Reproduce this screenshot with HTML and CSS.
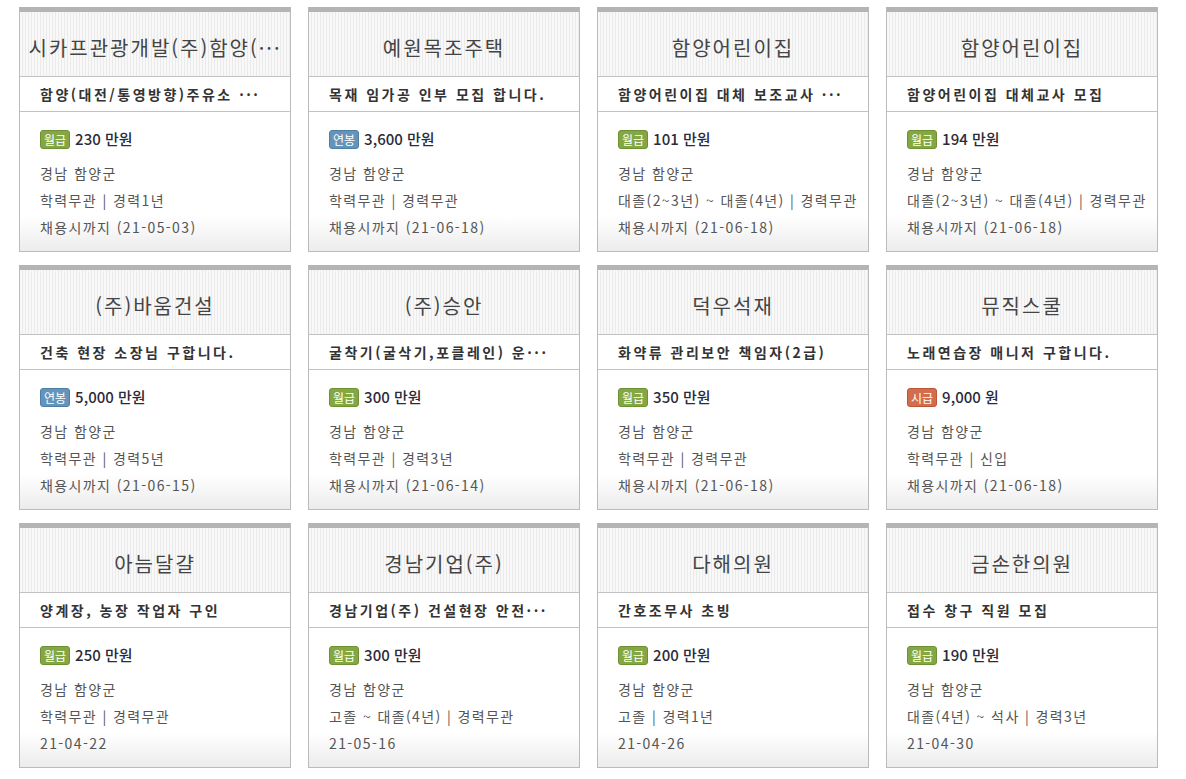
FILE: index.html
```html
<!DOCTYPE html>
<html lang="ko">
<head>
    <meta charset="UTF-8">
    <meta name="viewport" content="width=device-width, initial-scale=1.0">
    <title>채용정보</title>
    <link rel="stylesheet" href="styles.css">
</head>
<body>
    <div class="job-list">
        <div class="job">
            <div class="job-company">시카프관광개발(주)함양(···</div>
            <div class="job-title">함양(대전/통영방향)주유소 ···</div>
            <div class="job-info">
                <p class="pay"><span class="badge month">월급</span>230 만원</p>
                <p>경남 함양군</p>
                <p>학력무관 | 경력1년</p>
                <p>채용시까지 (21-05-03)</p>
            </div>
        </div>
        <div class="job">
            <div class="job-company">예원목조주택</div>
            <div class="job-title">목재 임가공 인부 모집 합니다.</div>
            <div class="job-info">
                <p class="pay"><span class="badge year">연봉</span>3,600 만원</p>
                <p>경남 함양군</p>
                <p>학력무관 | 경력무관</p>
                <p>채용시까지 (21-06-18)</p>
            </div>
        </div>
        <div class="job">
            <div class="job-company">함양어린이집</div>
            <div class="job-title">함양어린이집 대체 보조교사 ···</div>
            <div class="job-info">
                <p class="pay"><span class="badge month">월급</span>101 만원</p>
                <p>경남 함양군</p>
                <p>대졸(2~3년) ~ 대졸(4년) | 경력무관</p>
                <p>채용시까지 (21-06-18)</p>
            </div>
        </div>
        <div class="job">
            <div class="job-company">함양어린이집</div>
            <div class="job-title">함양어린이집 대체교사 모집</div>
            <div class="job-info">
                <p class="pay"><span class="badge month">월급</span>194 만원</p>
                <p>경남 함양군</p>
                <p>대졸(2~3년) ~ 대졸(4년) | 경력무관</p>
                <p>채용시까지 (21-06-18)</p>
            </div>
        </div>

        <div class="job">
            <div class="job-company">(주)바움건설</div>
            <div class="job-title">건축 현장 소장님 구합니다.</div>
            <div class="job-info">
                <p class="pay"><span class="badge year">연봉</span>5,000 만원</p>
                <p>경남 함양군</p>
                <p>학력무관 | 경력5년</p>
                <p>채용시까지 (21-06-15)</p>
            </div>
        </div>
        <div class="job">
            <div class="job-company">(주)승안</div>
            <div class="job-title">굴착기(굴삭기,포클레인) 운···</div>
            <div class="job-info">
                <p class="pay"><span class="badge month">월급</span>300 만원</p>
                <p>경남 함양군</p>
                <p>학력무관 | 경력3년</p>
                <p>채용시까지 (21-06-14)</p>
            </div>
        </div>
        <div class="job">
            <div class="job-company">덕우석재</div>
            <div class="job-title">화약류 관리보안 책임자(2급)</div>
            <div class="job-info">
                <p class="pay"><span class="badge month">월급</span>350 만원</p>
                <p>경남 함양군</p>
                <p>학력무관 | 경력무관</p>
                <p>채용시까지 (21-06-18)</p>
            </div>
        </div>
        <div class="job">
            <div class="job-company">뮤직스쿨</div>
            <div class="job-title">노래연습장 매니저 구합니다.</div>
            <div class="job-info">
                <p class="pay"><span class="badge hour">시급</span>9,000 원</p>
                <p>경남 함양군</p>
                <p>학력무관 | 신입</p>
                <p>채용시까지 (21-06-18)</p>
            </div>
        </div>

        <div class="job">
            <div class="job-company">아늠달걀</div>
            <div class="job-title">양계장, 농장 작업자 구인</div>
            <div class="job-info">
                <p class="pay"><span class="badge month">월급</span>250 만원</p>
                <p>경남 함양군</p>
                <p>학력무관 | 경력무관</p>
                <p>21-04-22</p>
            </div>
        </div>
        <div class="job">
            <div class="job-company">경남기업(주)</div>
            <div class="job-title">경남기업(주) 건설현장 안전···</div>
            <div class="job-info">
                <p class="pay"><span class="badge month">월급</span>300 만원</p>
                <p>경남 함양군</p>
                <p>고졸 ~ 대졸(4년) | 경력무관</p>
                <p>21-05-16</p>
            </div>
        </div>
        <div class="job">
            <div class="job-company">다해의원</div>
            <div class="job-title">간호조무사 초빙</div>
            <div class="job-info">
                <p class="pay"><span class="badge month">월급</span>200 만원</p>
                <p>경남 함양군</p>
                <p>고졸 | 경력1년</p>
                <p>21-04-26</p>
            </div>
        </div>
        <div class="job">
            <div class="job-company">금손한의원</div>
            <div class="job-title">접수 창구 직원 모집</div>
            <div class="job-info">
                <p class="pay"><span class="badge month">월급</span>190 만원</p>
                <p>경남 함양군</p>
                <p>대졸(4년) ~ 석사 | 경력3년</p>
                <p>21-04-30</p>
            </div>
        </div>
    </div>
</body>
</html>
```

FILE: styles.css
```css
body {
    margin: 0;
    padding: 7px 0 0 19px;
    background: #fff;
    font-family: "Noto Sans CJK KR", "Noto Sans", sans-serif;
    color: #555;
}

.job-list {
    display: grid;
    grid-template-columns: repeat(4, 272px);
    column-gap: 17px;
    row-gap: 13px;
}

.job {
    box-sizing: border-box;
    height: 245px;
    border: 1px solid #bbb;
    border-top: 5px solid #b4b4b4;
    display: flex;
    flex-direction: column;
}

.job-company {
    height: 65px;
    padding-top: 7px;
    box-sizing: border-box;
    border-bottom: 1px solid #c2c2c2;
    background: repeating-linear-gradient(90deg, #f8f8f8 0 2px, #ebebeb 2px 3px);
    display: flex;
    align-items: center;
    justify-content: center;
    font-size: 20px;
    letter-spacing: 2px;
    color: #444;
    white-space: nowrap;
    overflow: hidden;
}

.job-title {
    height: 35px;
    box-sizing: border-box;
    border-bottom: 1px solid #c2c2c2;
    padding: 0 0 0 20px;
    display: flex;
    align-items: center;
    font-size: 14px;
    font-weight: bold;
    letter-spacing: 2.5px;
    color: #333;
    white-space: nowrap;
    overflow: hidden;
}

.job-info {
    flex: 1;
    padding: 17px 0 0 20px;
    background: linear-gradient(to bottom, #fff 75%, #ececec);
}

.job-info p {
    margin: 0;
    font-size: 14px;
    line-height: 27px;
    letter-spacing: 1.4px;
    white-space: nowrap;
    overflow: hidden;
}

.job-info .pay {
    display: flex;
    align-items: center;
    height: 20px;
    line-height: 20px;
    margin-bottom: 11px;
    font-size: 15px;
    font-weight: 500;
    color: #2b2b3a;
    letter-spacing: 0;
}

.badge {
    display: inline-block;
    height: 17px;
    line-height: 17px;
    padding: 0 3px;
    margin-right: 5px;
    border-radius: 3px;
    font-size: 12px;
    font-weight: normal;
    letter-spacing: 0;
    color: #fff;
}

.badge.month {
    background: #84a744;
    border: 1px solid #6e9134;
}

.badge.year {
    background: #6594ba;
    border: 1px solid #4f7ea4;
}

.badge.hour {
    background: #d36d4b;
    border: 1px solid #b95638;
}
```
